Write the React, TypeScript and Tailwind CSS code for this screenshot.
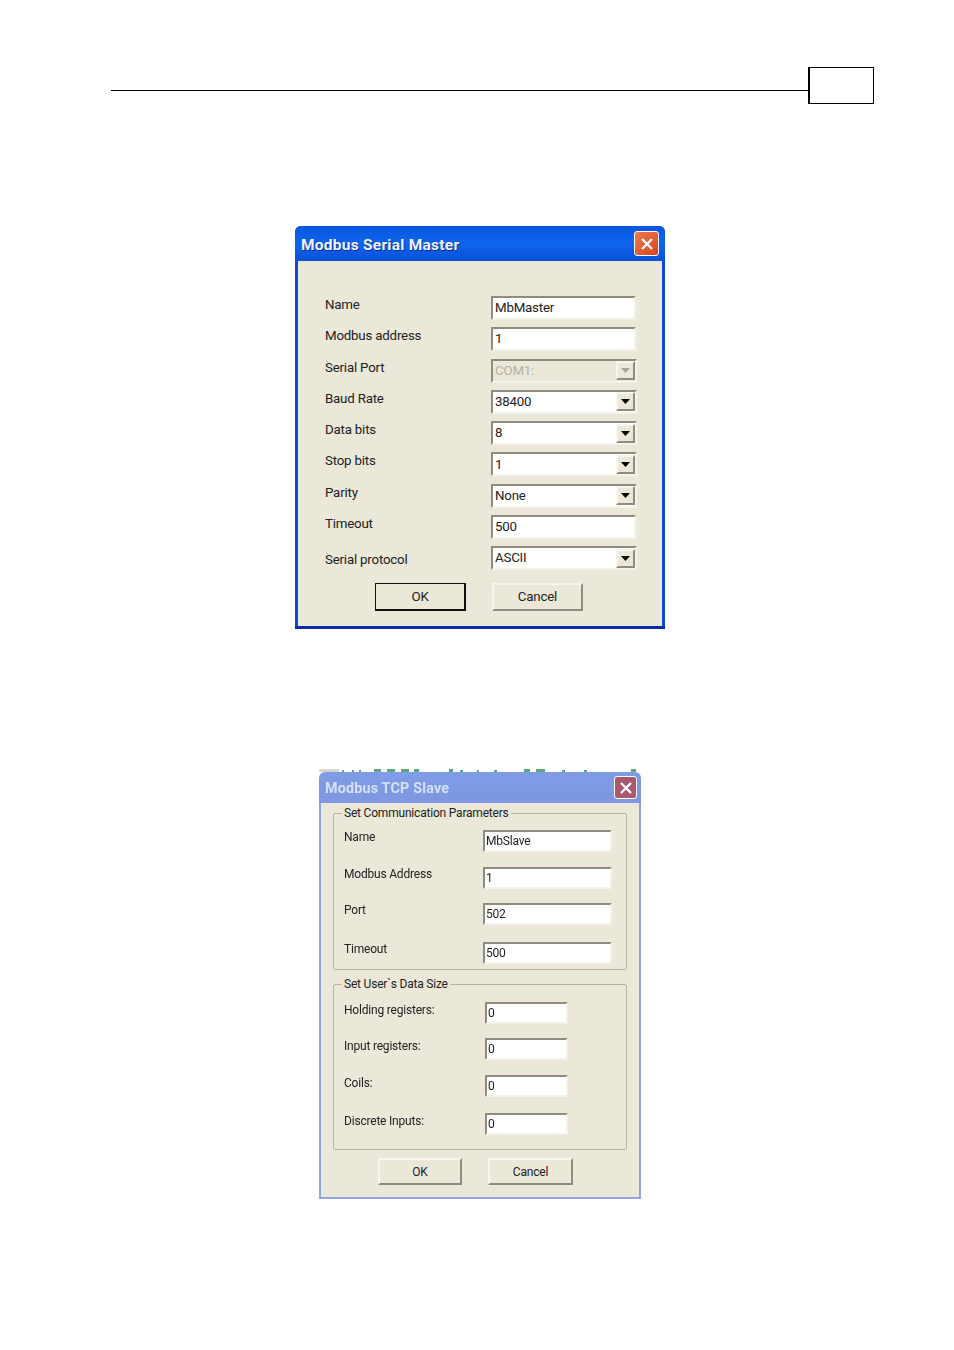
import type { ReactNode } from 'react';

const inset = 'border-2 border-t-[#8e8c7e] border-l-[#8e8c7e] border-r-[#f4f3ea] border-b-[#f4f3ea]';

function Field({ value, tight = false }: { value: string; tight?: boolean }) {
  return (
    <div className={`flex h-full items-center bg-white text-[#222] ${tight ? 'pl-[1px]' : 'pl-[2px]'} ${inset}`}>
      {value}
    </div>
  );
}

function Combo({ value, disabled = false }: { value: string; disabled?: boolean }) {
  return (
    <div className={`flex h-full items-center pl-[2px] ${inset} ${disabled ? 'bg-[#ebe8d9] text-[#b5b3a6]' : 'bg-white text-[#222]'}`}>
      <span className="flex-1">{value}</span>
      <span className="flex h-[19px] w-[19px] items-center justify-center border-2 border-t-[#f7f6ee] border-l-[#f7f6ee] border-r-[#8e8c7e] border-b-[#8e8c7e] bg-[#ebe8d9]">
        <svg width="9" height="5" viewBox="0 0 9 5">
          <path d="M0 0h9L4.5 5z" fill={disabled ? '#a8a69a' : '#000'} />
        </svg>
      </span>
    </div>
  );
}

function Btn({ label, primary = false, width }: { label: string; primary?: boolean; width: string }) {
  const edge = primary
    ? 'border border-r-2 border-b-2 border-[#111]'
    : 'border-2 border-t-[#f7f6ee] border-l-[#f7f6ee] border-r-[#8e8c7e] border-b-[#8e8c7e]';
  return (
    <button type="button" className={`flex h-full items-center justify-center bg-[#ebe8d9] text-[#222] ${edge} ${width}`}>
      {label}
    </button>
  );
}

function CloseBtn({ faded = false }: { faded?: boolean }) {
  return (
    <span
      className={`flex items-center justify-center rounded-[3px] border border-white ${
        faded ? 'h-[23px] w-[23px] bg-[#a8596f]' : 'h-[25px] w-[25px] bg-gradient-to-br from-[#ee7a4e] to-[#d8431f]'
      }`}
    >
      <svg width="14" height="14" viewBox="0 0 14 14">
        <path d="M2 2l10 10M12 2L2 12" stroke="#fff" strokeWidth="2.4" />
      </svg>
    </span>
  );
}

function Group({ title, className, children }: { title: string; className: string; children: ReactNode }) {
  return (
    <div className={`relative rounded-[2px] border border-[#b5b3a3] pl-[10px] ${className}`}>
      <span className="absolute left-[8px] top-[-9px] bg-[#ebe8d9] px-[2px] leading-[16px]">{title}</span>
      {children}
    </div>
  );
}

const serialRows: { label: string; value: string; combo?: boolean; disabled?: boolean }[] = [
  { label: 'Name', value: 'MbMaster' },
  { label: 'Modbus address', value: '1' },
  { label: 'Serial Port', value: 'COM1:', combo: true, disabled: true },
  { label: 'Baud Rate', value: '38400', combo: true },
  { label: 'Data bits', value: '8', combo: true },
  { label: 'Stop bits', value: '1', combo: true },
  { label: 'Parity', value: 'None', combo: true },
  { label: 'Timeout', value: '500' },
];

const commRows = [
  { label: 'Name', value: 'MbSlave', gap: '' },
  { label: 'Modbus Address', value: '1', gap: 'mt-[15px]' },
  { label: 'Port', value: '502', gap: 'mt-[14px]' },
  { label: 'Timeout', value: '500', gap: 'mt-[17px]' },
];

const sizeRows = [
  { label: 'Holding registers:', gap: '' },
  { label: 'Input registers:', gap: 'mt-[14px]' },
  { label: 'Coils:', gap: 'mt-[15px]' },
  { label: 'Discrete Inputs:', gap: 'mt-[16px]' },
];

function SerialMaster() {
  return (
    <section className="ml-[295px] mt-[122px] h-[403px] w-[370px] overflow-hidden rounded-t-[6px] border-b-[3px] border-[#0a2cb0] bg-[#0a48d8] text-[13.3px] tracking-[-0.2px] text-[#222] [font-family:Roboto,'Liberation_Sans',sans-serif]">
      <div className="flex h-[35px] items-center justify-between bg-gradient-to-b from-[#0a56e0] via-[#0f64ee] to-[#0a50d8] pl-[6px] pr-[6px]">
        <h2 className="pt-[4px] text-[15.5px] font-bold tracking-[0.25px] text-[#eef4ff] [text-shadow:1px_1px_0_#0a2f90]">Modbus Serial Master</h2>
        <CloseBtn />
      </div>
      <div className="mx-[2px] h-[365px] border-l border-r border-[#1450d8] bg-[#ebe8d9] pt-[35px]">
        {serialRows.map((row) => (
          <div key={row.label} className="flex h-[31.3px]">
            <span className="ml-[27px] w-[166px] leading-[17px]">{row.label}</span>
            <div className={`h-[24px] ${row.combo ? 'w-[146px]' : 'w-[145px]'}`}>
              {row.combo ? <Combo value={row.value} disabled={row.disabled} /> : <Field value={row.value} />}
            </div>
          </div>
        ))}
        <div className="flex h-[37px]">
          <span className="ml-[27px] w-[166px] pt-[5px] leading-[17px]">Serial protocol</span>
          <div className="h-[24px] w-[146px]">
            <Combo value="ASCII" />
          </div>
        </div>
        <div className="flex h-[28px] pl-[77px]">
          <Btn label="OK" primary width="w-[91px]" />
          <div className="w-[26px]" />
          <Btn label="Cancel" width="w-[91px]" />
        </div>
      </div>
    </section>
  );
}

function TcpSlave() {
  return (
    <section className="ml-[319px] mt-[140px] w-[322px] text-[12px] tracking-[-0.2px] text-[#222] [font-family:Roboto,'Liberation_Sans',sans-serif]">
      {/* sliver of the figure above that the crop left in */}
      <svg width="322" height="3" viewBox="0 0 322 3" className="block">
        <path d="M0 0h20v3H0z" fill="#d8d6cc" />
        <path d="M23 1h2v2h-2zM33 1h2v2h-2zM40 1h2v2h-2zM55 0h7v3h-7zM68 0h8v3h-8zM82 0h8v3h-8zM95 0h5v3h-5zM130 0h4v3h-4zM141 1h3v2h-3zM158 1h2v2h-2zM175 1h3v2h-3zM205 0h6v3h-6zM217 0h9v3h-9zM243 1h3v2h-3zM265 1h3v2h-3zM312 0h5v3h-5z" fill="#5fa67c" />
      </svg>
      <div className="flex h-[31px] items-center justify-between rounded-t-[6px] bg-gradient-to-b from-[#7f9ce6] to-[#7d97e0] pl-[6px] pr-[4px]">
        <h2 className="pt-[2px] text-[14.3px] font-bold tracking-[0.2px] text-[#d5e0f8]">Modbus TCP Slave</h2>
        <CloseBtn faded />
      </div>
      <div className="h-[396px] border-2 border-t-0 border-[#8fa6e4] bg-[#ebe8d9] px-[12px] pt-[10px]">
        <Group title="Set Communication Parameters" className="h-[157px] pt-[16px]">
          {commRows.map((row) => (
            <div key={row.label} className={`flex h-[22px] ${row.gap}`}>
              <span className="w-[139px] leading-[15px]">{row.label}</span>
              <div className="h-full w-[129px]">
                <Field value={row.value} tight />
              </div>
            </div>
          ))}
        </Group>
        <Group title="Set User`s Data Size" className="mt-[14px] h-[166px] pt-[17px]">
          {sizeRows.map((row) => (
            <div key={row.label} className={`flex h-[22px] ${row.gap}`}>
              <span className="w-[141px] pt-[1px] leading-[15px]">{row.label}</span>
              <div className="h-full w-[83px]">
                <Field value="0" tight />
              </div>
            </div>
          ))}
        </Group>
        <div className="mt-[8px] flex h-[27px] pl-[45px]">
          <Btn label="OK" width="w-[84px]" />
          <div className="w-[26px]" />
          <Btn label="Cancel" width="w-[85px]" />
        </div>
      </div>
    </section>
  );
}

export default function App() {
  return (
    <div className="h-[1350px] w-[954px] overflow-hidden bg-white">
      <header className="ml-[111px] mt-[67px] flex h-[37px] w-[763px]">
        <div className="mt-[23px] h-px flex-1 bg-black" />
        <div className="h-full w-[66px] border border-l-2 border-black" />
      </header>
      <div className="blur-[0.4px]">
        <SerialMaster />
        <TcpSlave />
      </div>
    </div>
  );
}
